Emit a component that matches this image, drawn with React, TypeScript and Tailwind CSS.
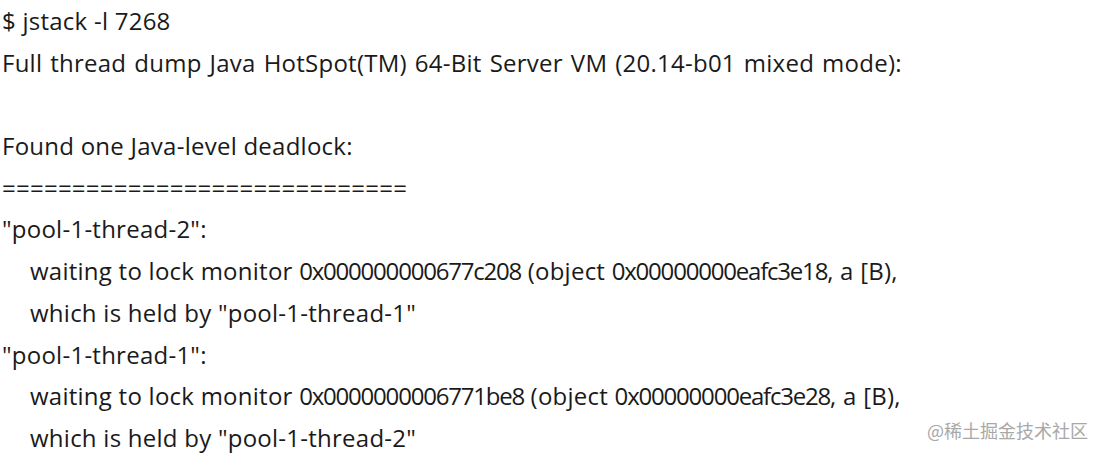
import React from 'react';

type Part = string | { hex: string };

const LINES: { parts: Part[]; indent?: boolean; wide?: boolean }[] = [
  { parts: ['$ jstack -l 7268'] },
  { parts: ['Full thread dump Java HotSpot(TM) 64-Bit Server VM (20.14-b01 mixed mode):'], wide: true },
  { parts: [''] },
  { parts: ['Found one Java-level deadlock:'] },
  { parts: ['============================='] },
  { parts: ['"pool-1-thread-2":'] },
  {
    parts: ['waiting to lock monitor ', { hex: '0x000000000677c208' }, ' (object ', { hex: '0x00000000eafc3e18' }, ', a [B),'],
    indent: true,
  },
  { parts: ['which is held by "pool-1-thread-1"'], indent: true },
  { parts: ['"pool-1-thread-1":'] },
  {
    parts: ['waiting to lock monitor ', { hex: '0x0000000006771be8' }, ' (object ', { hex: '0x00000000eafc3e28' }, ', a [B),'],
    indent: true,
  },
  { parts: ['which is held by "pool-1-thread-2"'], indent: true },
];

export default function App() {
  return (
    <div className="relative h-[456px] w-[1103px] overflow-hidden bg-white">
      <div className="flex flex-col pl-[2px] font-['Open_Sans',sans-serif] text-[24px] leading-[41.7px] tracking-[0.25px] text-[#1a1a1a]">
        {LINES.map((line, i) => (
          <div
            key={i}
            className={
              line.indent
                ? 'h-[41.7px] whitespace-pre pl-[28px]'
                : line.wide
                  ? 'h-[41.7px] whitespace-pre [word-spacing:1.5px]'
                  : 'h-[41.7px] whitespace-pre'
            }
          >
            {line.parts.map((p, j) =>
              typeof p === 'string' ? (
                <span key={j}>{p}</span>
              ) : (
                <span key={j} className="tracking-[-1.2px]">
                  {p.hex}
                </span>
              ),
            )}
          </div>
        ))}
      </div>
      <div className="absolute right-[15px] top-[417px] font-['Noto_Sans_CJK_SC',sans-serif] text-[18px] text-[#a8a8a8]">
        @稀土掘金技术社区
      </div>
    </div>
  );
}
